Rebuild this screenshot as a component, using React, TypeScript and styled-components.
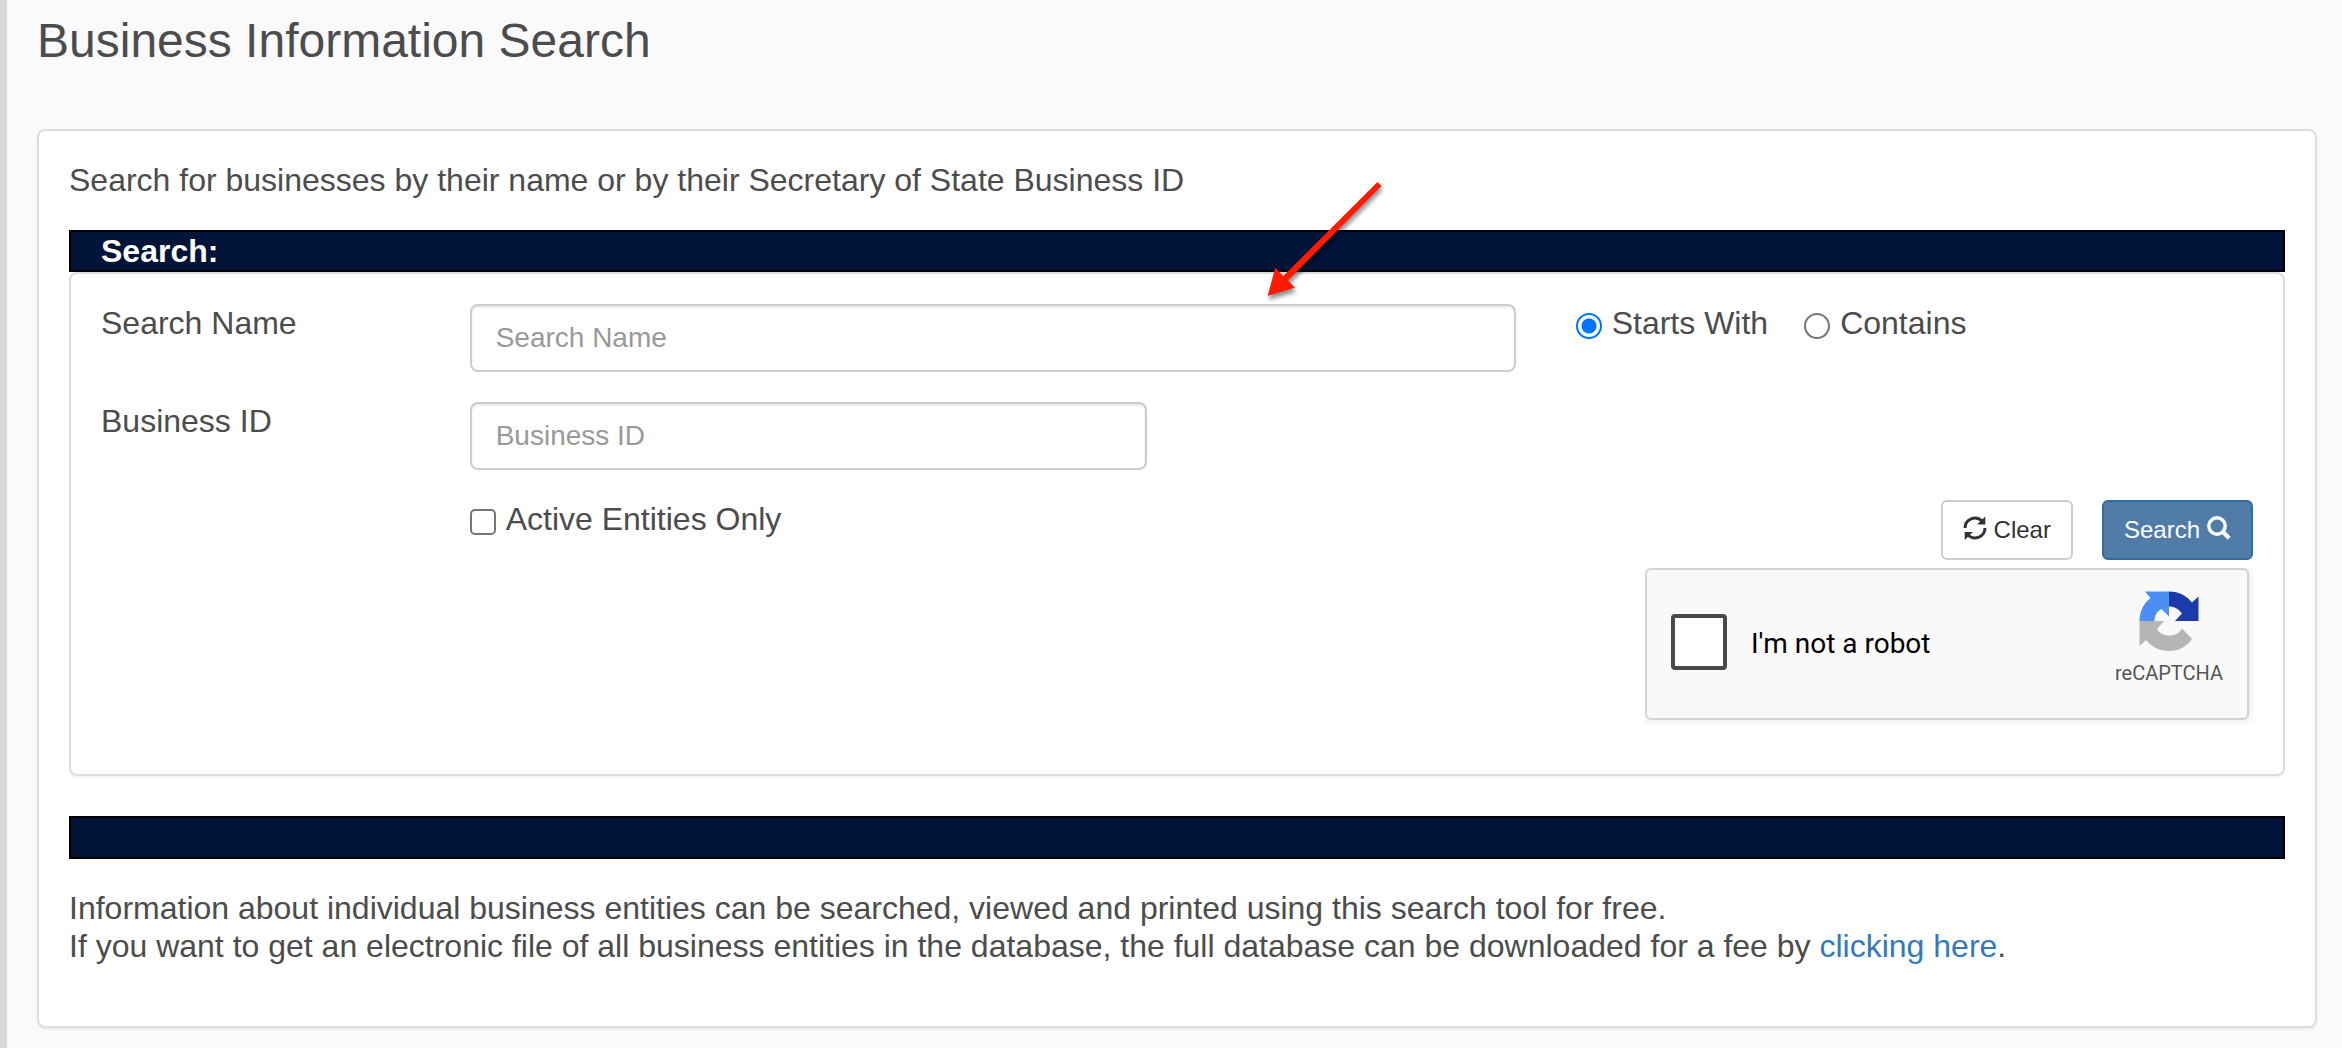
import React from 'react';
import styled, { createGlobalStyle } from 'styled-components';

const GlobalStyle = createGlobalStyle`
  *, *::before, *::after { box-sizing: border-box; }
  body {
    margin: 0;
    background: #fafafd;
    color: #4c4c4c;
    font: 32px/38px "Liberation Sans", Arial, Helvetica, sans-serif;
  }
`;

const Page = styled.div`
  min-height: 100vh;
  padding: 0 25px 20px 30px;
  border-left: 7px solid #dadada;
`;

const Title = styled.h1`
  margin: 0;
  padding: 14px 0 62px;
  font-size: 48px;
  line-height: 53px;
  font-weight: 400;
`;

const Panel = styled.section`
  padding: 30px;
  background: #fff;
  border: 2px solid #ddd;
  border-radius: 8px;
  box-shadow: 0 2px 2px rgba(0, 0, 0, 0.05);
`;

const Intro = styled.p`
  margin: 0 0 31px;
`;

const Bar = styled.h2`
  margin: 0;
  min-height: 42px;
  padding: 0 30px;
  border: 2px solid #000;
  background: #001339;
  color: #fff;
  font-size: 32px;
  line-height: 38px;
  font-weight: 700;
`;

const Divider = styled.div`
  height: 43px;
  margin: 40px 0 30px;
  border: 2px solid #000;
  background: #001339;
`;

const Form = styled.form`
  display: grid;
  grid-template-columns: repeat(12, minmax(0, 1fr));
  gap: 30px 60px;
  padding: 30px 30px 54px;
  border: 2px solid #ddd;
  border-radius: 8px;
  box-shadow: 0 2px 2px rgba(0, 0, 0, 0.05);
`;

const FieldLabel = styled.label`
  grid-column: 1 / span 2;
`;

const Field = styled.div<{ $span: number }>`
  position: relative;
  grid-column: 3 / span ${(p) => p.$span};
`;

const TextInput = styled.input`
  display: block;
  width: 100%;
  height: 68px;
  padding: 12px 24px;
  border: 2px solid #ccc;
  border-radius: 8px;
  background: #fff;
  box-shadow: inset 0 2px 2px rgba(0, 0, 0, 0.075);
  color: #555;
  font: inherit;
  font-size: 28px;

  &::placeholder { color: #999; opacity: 1; }
`;

const Choices = styled.div`
  grid-column: 9 / span 4;
  display: flex;
  align-items: flex-start;
  gap: 36px;
`;

const Choice = styled.label`
  display: flex;
  align-items: flex-start;
  gap: 10px;
  white-space: nowrap;
`;

const Radio = styled.input`
  appearance: none;
  width: 26px;
  height: 26px;
  margin: 9px 0 0;
  border: 2px solid #767676;
  border-radius: 50%;
  background: #fff;

  &:checked {
    border-color: #0075ff;
    background: radial-gradient(circle, #0075ff 7px, #fff 8px);
  }
`;

const Checkbox = styled.input`
  appearance: none;
  width: 26px;
  height: 26px;
  margin: 9px 0 0;
  border: 2px solid #767676;
  border-radius: 5px;
  background: #fff;

  &:checked { background: #0075ff; border-color: #0075ff; }
`;

const Actions = styled.div`
  grid-column: 7 / span 6;
  display: flex;
  flex-direction: column;
  align-items: flex-end;
  gap: 8px;
`;

const Buttons = styled.div`
  display: flex;
  gap: 29px;
`;

const Button = styled.button<{ $primary?: boolean }>`
  display: flex;
  align-items: center;
  gap: 7px;
  height: 60px;
  padding: 0 20px;
  border: 2px solid ${(p) => (p.$primary ? '#2e6da4' : '#ccc')};
  border-radius: 6px;
  background: ${(p) => (p.$primary ? '#517ca7' : '#fff')};
  color: ${(p) => (p.$primary ? '#fff' : '#333')};
  font: inherit;
  font-size: 24px;
  cursor: pointer;

  svg { margin-bottom: 4px; }
`;

const Captcha = styled.div`
  display: flex;
  align-items: center;
  justify-content: space-between;
  width: 604px;
  height: 152px;
  margin-right: 4px;
  padding: 0 24px 4px;
  border: 2px solid #d3d3d3;
  border-radius: 6px;
  background: #f9f9f9;
  box-shadow: 0 0 8px 2px rgba(0, 0, 0, 0.08);
  color: #000;
  font-family: Roboto, "Liberation Sans", sans-serif;
  clip-path: inset(0 -4px -4px 0);
`;

const RobotLabel = styled.label`
  display: flex;
  align-items: center;
  gap: 24px;
  font-size: 28px;
  line-height: 34px;
`;

const RobotText = styled.span`
  padding-top: 4px;
`;

const RobotBox = styled.input`
  appearance: none;
  width: 56px;
  height: 56px;
  margin: 0;
  border: 4px solid #4a4a4a;
  border-radius: 4px;
  background: #fff;
`;

const Brand = styled.div`
  display: flex;
  flex-direction: column;
  align-items: center;
  gap: 10px;
  padding-bottom: 8px;
  color: #555;
  font-size: 20px;
  line-height: 24px;
`;

const Note = styled.p`
  margin: 0 0 31px;
`;

const Link = styled.a`
  color: #337ab7;
  text-decoration: none;
`;

const Pointer = styled.svg`
  position: absolute;
  left: 785px;
  bottom: 62px;
  overflow: visible;
  pointer-events: none;
  filter: drop-shadow(1px 4px 2px rgba(0, 0, 0, 0.45));
`;

const RefreshIcon = () => (
  <svg width="24" height="24" viewBox="0 0 24 24" fill="none" aria-hidden="true">
    <path d="M2 12a10 10 0 0 1 17-7" stroke="currentColor" strokeWidth="3" />
    <path d="M22 12a10 10 0 0 1-17 7" stroke="currentColor" strokeWidth="3" />
    <path d="M22.300.5v8h-8.3z M1.700 24v-8h8.3z" fill="currentColor" />
  </svg>
);

const SearchIcon = () => (
  <svg width="24" height="24" viewBox="0 0 24 24" fill="none" stroke="currentColor" aria-hidden="true">
    <circle cx="10" cy="10" r="8.2" strokeWidth="3.4" />
    <path d="M15.6 15.6l6.6 6.6" strokeWidth="4.2" />
  </svg>
);

const CaptchaLogo = () => (
  <svg width="60" height="60" viewBox="0 0 60 60" aria-hidden="true">
    <path d="M30 .5C40 .5 48 5 53 11.5L59.5 5.5V30H36l7-7.500C39.5 18 35.500 15.500 30 15.500z" fill="#1c3aa9" />
    <path d="M30 .5v25l-7.500-7.500c-4 2-7 6-7 12H.5c0-9.500 4-17.500 11-23L6 .5z" fill="#4a90f4" />
    <path d="M.5 30H25l-7 8C20 42 25 44.500 30 44.500c6 0 10.500-2.500 13-7L53 48c-5 7.500-13 12-23 12-9.500 0-17.500-4-23-11L.5 55z" fill="#b5b5b5" />
  </svg>
);

export default function App() {
  return (
    <>
      <GlobalStyle />
      <Page>
        <Title>Business Information Search</Title>
        <Panel>
          <Intro>Search for businesses by their name or by their Secretary of State Business ID</Intro>
          <Bar>Search:</Bar>
          <Form onSubmit={(e) => e.preventDefault()}>
            <FieldLabel htmlFor="name">Search Name</FieldLabel>
            <Field $span={6}>
              <TextInput id="name" type="text" placeholder="Search Name" />
              <Pointer width="140" height="140" viewBox="0 0 140 140" aria-hidden="true">
                <path d="M122.500 12l4 4L33 110.500l7 7.200-27.300 8 7.600-28 8 8.300z" fill="#ff1a00" />
              </Pointer>
            </Field>
            <Choices>
              <Choice>
                <Radio type="radio" name="match" defaultChecked />
                Starts With
              </Choice>
              <Choice>
                <Radio type="radio" name="match" />
                Contains
              </Choice>
            </Choices>

            <FieldLabel htmlFor="business-id">Business ID</FieldLabel>
            <Field $span={4}>
              <TextInput id="business-id" type="text" placeholder="Business ID" />
            </Field>

            <Field $span={4}>
              <Choice>
                <Checkbox type="checkbox" />
                Active Entities Only
              </Choice>
            </Field>
            <Actions>
              <Buttons>
                <Button type="reset"><RefreshIcon />Clear</Button>
                <Button type="submit" $primary>Search<SearchIcon /></Button>
              </Buttons>
              <Captcha>
                <RobotLabel>
                  <RobotBox type="checkbox" />
                  <RobotText>I'm not a robot</RobotText>
                </RobotLabel>
                <Brand>
                  <CaptchaLogo />
                  reCAPTCHA
                </Brand>
              </Captcha>
            </Actions>
          </Form>
          <Divider />
          <Note>
            Information about individual business entities can be searched, viewed and printed using this search tool for free.
            <br />
            If you want to get an electronic file of all business entities in the database, the full database can be downloaded
            for a fee by <Link href="#download">clicking here</Link>.
          </Note>
        </Panel>
      </Page>
    </>
  );
}
